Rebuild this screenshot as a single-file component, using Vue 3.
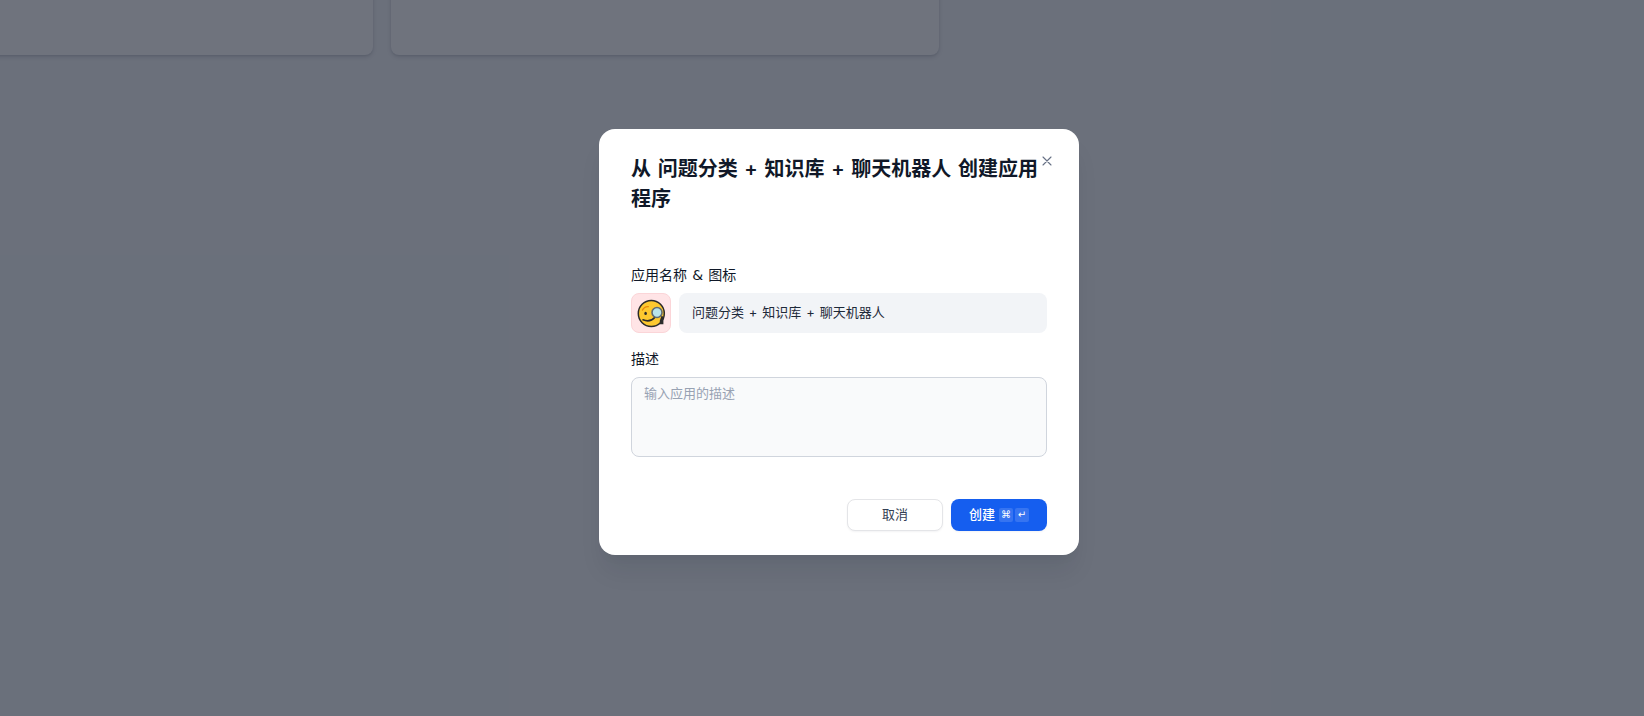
<template>
  <div class="page">
    <div class="cards">
      <div class="card card-left"></div>
      <div class="card card-right"></div>
    </div>
    <div class="overlay">
      <div class="modal">
        <button class="close" aria-label="关闭">
          <svg width="16" height="16" viewBox="0 0 16 16" fill="none" stroke="#667085" stroke-width="1.1" stroke-linecap="round">
            <path d="M4 4l8 8M12 4l-8 8" />
          </svg>
        </button>
        <h2 class="title">从 {{ appName }} 创建应用程序</h2>
        <div class="field first">
          <div class="label">应用名称 <span class="amp">&amp;</span> 图标</div>
          <div class="name-row">
            <div class="app-icon">
              <svg width="30" height="30" viewBox="0 0 30 30">
                <circle cx="15.3" cy="15.5" r="13" fill="#fdc82f" stroke="#2b2b2b" stroke-width="1.5" />
                <path d="M6.5 12c1.2-2.4 3.2-3.6 5.8-3.4" fill="none" stroke="#e8890c" stroke-width="1.4" stroke-linecap="round" />
                <ellipse cx="9.6" cy="15.4" rx="1.3" ry="1.7" fill="#2b2b2b" />
                <path d="M7 21.8c4.2 1.8 8.6 1.2 12-2.6" fill="none" stroke="#2b2b2b" stroke-width="1.6" stroke-linecap="round" />
                <path d="M25.6 17.5l1.8 1.5v7.2h-3.6v-3.4z" fill="#2b2b2b" />
                <circle cx="21" cy="14.5" r="5" fill="#b9e4ea" stroke="#5f6b73" stroke-width="1.6" />
              </svg>
            </div>
            <div class="name-input">{{ appName }}</div>
          </div>
        </div>
        <div class="field">
          <div class="label">描述</div>
          <textarea class="desc" placeholder="输入应用的描述"></textarea>
        </div>
        <div class="footer">
          <button class="btn cancel">取消</button>
          <button class="btn create">
            创建
            <span class="keys">
              <span class="key">⌘</span>
              <span class="key">↵</span>
            </span>
          </button>
        </div>
      </div>
    </div>
  </div>
</template>

<script setup>
const appName = "问题分类 + 知识库 + 聊天机器人";
</script>

<style scoped>
.page {
  position: relative;
  height: 716px;
  overflow: hidden;
  background: #f2f4f7;
  font-family: Inter, "Noto Sans CJK SC", sans-serif;
  word-spacing: 0.075em;
}
.cards {
  display: flex;
  gap: 18px;
  margin-left: -175px;
  margin-top: -105px;
}
.card {
  height: 160px;
  background: #fcfcfd;
  border-radius: 8px;
  box-shadow: 0 2px 4px rgba(16, 24, 40, 0.14), 0 1px 2px rgba(16, 24, 40, 0.08);
}
.card-left {
  width: 548px;
}
.card-right {
  width: 548px;
}
.overlay {
  position: absolute;
  inset: 0;
  display: flex;
  align-items: center;
  justify-content: center;
  padding: 0 0 32px 34px;
  background: rgba(16, 24, 40, 0.6);
  box-sizing: border-box;
}
.modal {
  position: relative;
  width: 480px;
  box-sizing: border-box;
  padding: 24px 32px;
  background: #fff;
  border-radius: 16px;
  box-shadow: 0 20px 24px -4px rgba(16, 24, 40, 0.08), 0 8px 8px -4px rgba(16, 24, 40, 0.03);
}
.close {
  position: absolute;
  top: 24px;
  right: 24px;
  width: 16px;
  height: 16px;
  padding: 0;
  border: none;
  background: none;
}
.title {
  margin: 0;
  padding-top: 1px;
  font-size: 20px;
  line-height: 30px;
  font-weight: 600;
  color: #101828;
  word-spacing: 0.082em;
}
.field {
  margin-top: 14px;
}
.field.first {
  margin-top: 49px;
}
.label {
  font-size: 14px;
  line-height: 20px;
  color: #101828;
  margin-bottom: 8px;
  padding-top: 2px;
}
.amp {
  font-family: "DejaVu Sans", sans-serif;
}
.name-row {
  display: flex;
  align-items: center;
  gap: 8px;
}
.app-icon {
  display: flex;
  align-items: center;
  justify-content: center;
  width: 40px;
  height: 40px;
  box-sizing: border-box;
  border-radius: 8px;
  background: #ffe4e6;
  border: 1px solid #fbd5d8;
}
.name-input {
  flex: 1;
  height: 40px;
  line-height: 38px;
  padding: 0 12px 0 13px;
  border-radius: 8px;
  background: #f2f4f7;
  font-size: 13px;
  color: #1d2939;
}
.desc {
  display: block;
  width: 100%;
  height: 80px;
  box-sizing: border-box;
  padding: 5px 12px;
  resize: none;
  border: 1px solid #d0d5dd;
  border-radius: 8px;
  background: #f9fafb;
  font-family: inherit;
  font-size: 13px;
  line-height: 20px;
  outline: none;
}
.desc::placeholder {
  color: #98a2b3;
}
.footer {
  display: flex;
  justify-content: flex-end;
  gap: 8px;
  margin-top: 42px;
}
.btn {
  display: flex;
  align-items: center;
  justify-content: center;
  width: 96px;
  height: 32px;
  box-sizing: border-box;
  padding: 0 0 2px;
  border-radius: 8px;
  font-family: inherit;
  font-size: 13px;
  line-height: 20px;
  font-weight: 500;
}
.cancel {
  border: 1px solid #e4e5e8;
  background: #fff;
  color: #344054;
  font-weight: 400;
  box-shadow: 0 1px 2px rgba(16, 24, 40, 0.05);
}
.create {
  gap: 4px;
  border: none;
  background: #155eef;
  color: #fff;
  box-shadow: 0 1px 2px rgba(16, 24, 40, 0.05);
}
.keys {
  display: flex;
  gap: 2px;
  margin-top: 1px;
}
.key {
  display: flex;
  align-items: center;
  justify-content: center;
  width: 14px;
  height: 14px;
  border-radius: 2px;
  background: rgba(255, 255, 255, 0.14);
  font-size: 10px;
  font-weight: 400;
  font-family: "DejaVu Sans", sans-serif;
}
</style>
